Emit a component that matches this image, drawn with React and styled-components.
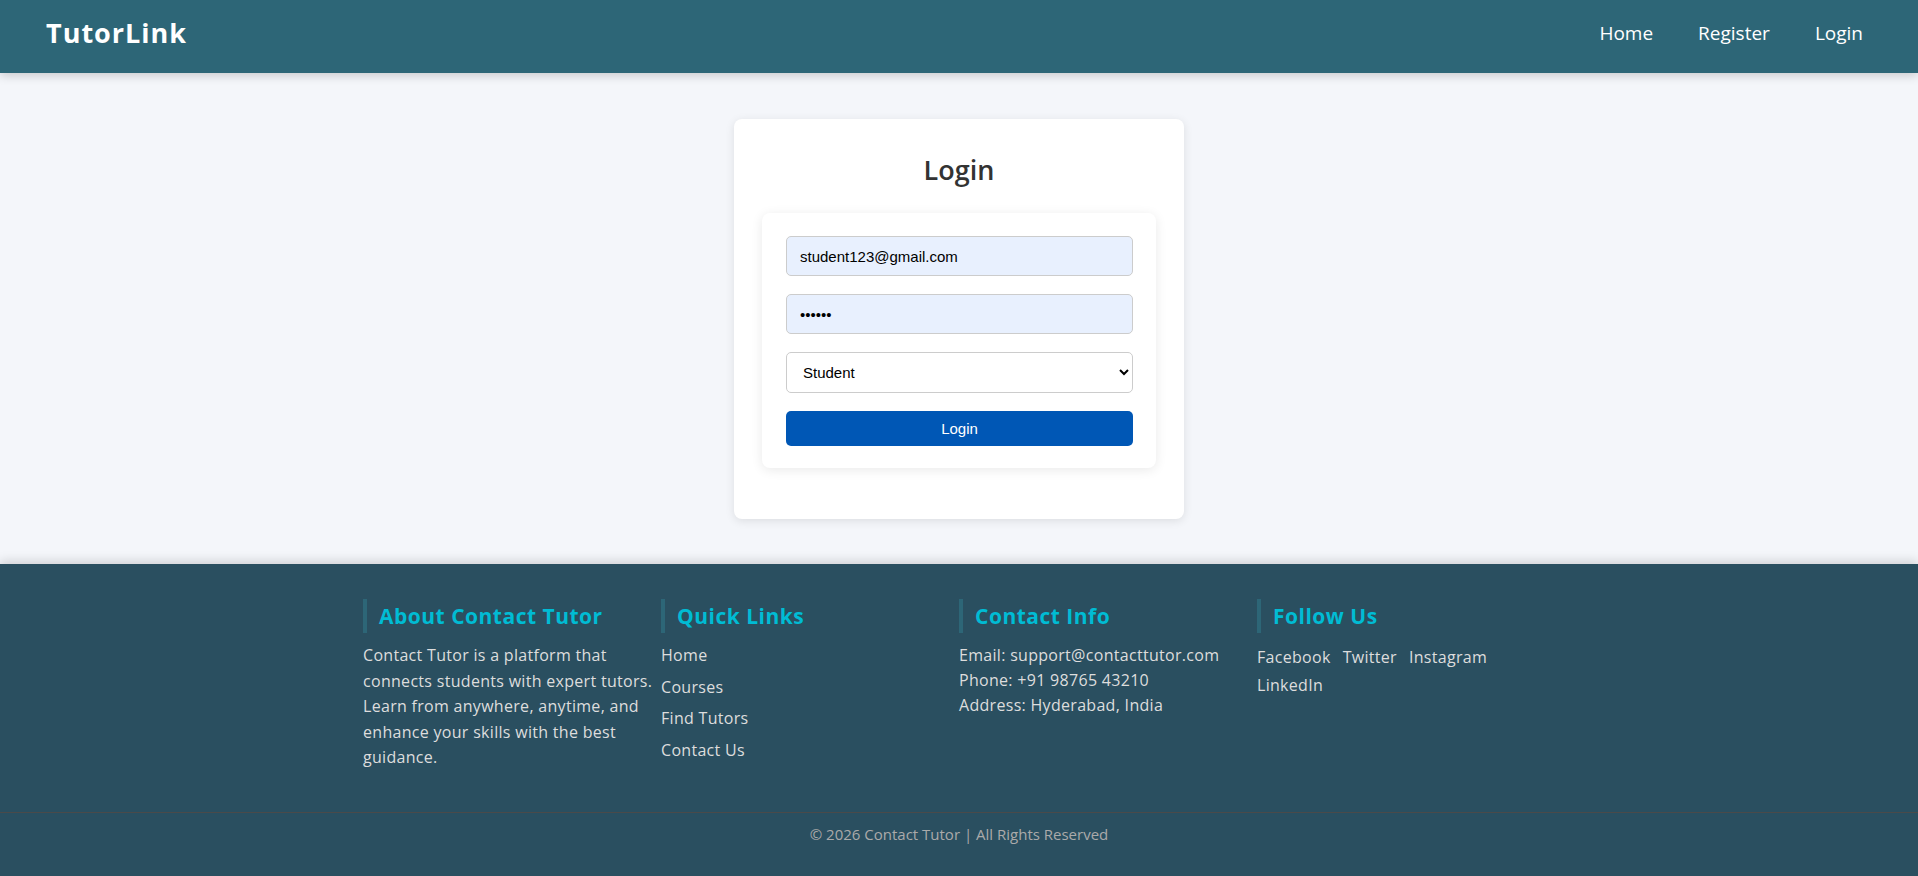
import styled, { createGlobalStyle } from "styled-components"

const GlobalStyle = createGlobalStyle`
  * { box-sizing: border-box; }
  body {
    margin: 0;
    background: #f4f6fa;
    font-family: "Open Sans", "Liberation Sans", sans-serif;
  }
`

const Page = styled.div`
  display: flex;
  flex-direction: column;
  min-height: 100vh;
`

const Header = styled.header`
  height: 73px;
  background: #2d6677;
  display: flex;
  align-items: center;
  justify-content: space-between;
  padding: 0 55px 8px 46px;
  box-shadow: 0 2px 10px rgba(0, 0, 0, 0.2);
  position: relative;
  z-index: 2;
`

const Logo = styled.div`
  color: #fff;
  font-size: 27px;
  font-weight: 700;
  letter-spacing: 1px;
`

const Nav = styled.nav`
  display: flex;
  gap: 45px;
  a {
    color: #fff;
    text-decoration: none;
    font-size: 19px;
  }
`

const Main = styled.main`
  padding: 46px 0 45px;
  display: flex;
  justify-content: center;
`

const Card = styled.div`
  width: 450px;
  height: 400px;
  background: #fff;
  border-radius: 8px;
  box-shadow: 0 2px 10px rgba(0, 0, 0, 0.1);
  padding: 34px 28px 0;
`

const Title = styled.h2`
  margin: 0 0 26px;
  text-align: center;
  font-size: 27px;
  line-height: 34px;
  font-weight: 600;
  color: #333;
`

const Form = styled.form`
  display: flex;
  flex-direction: column;
  gap: 18px;
  padding: 23px 23px 22px 24px;
  border-radius: 8px;
  background: #fff;
  box-shadow: 0 2px 12px rgba(0, 0, 0, 0.09);
`

const Field = styled.input`
  height: 40px;
  padding: 0 13px;
  border: 1px solid #ccc;
  border-radius: 5px;
  background: #e8f0fe;
  font-family: "Liberation Sans", Arial, sans-serif;
  font-size: 15px;
  color: #000;
  outline: none;
`

const Select = styled.select`
  height: 41px;
  padding: 0 12px;
  border: 1px solid #ccc;
  border-radius: 5px;
  background: #fff;
  font-family: "Liberation Sans", Arial, sans-serif;
  font-size: 15px;
  color: #000;
`

const Button = styled.button`
  height: 35px;
  border: none;
  border-radius: 5px;
  background: #0057b5;
  color: #fff;
  font-family: "Liberation Sans", Arial, sans-serif;
  font-size: 15px;
`

const Footer = styled.footer`
  background: #2a4f60;
  color: #ddd;
  padding-top: 35px;
  box-shadow: 0 -3px 10px rgba(0, 0, 0, 0.15);
  flex: 1;
`

const Columns = styled.div`
  width: 1192px;
  margin: 0 auto;
  display: grid;
  grid-template-columns: repeat(4, 1fr);
`

const Column = styled.div`
  padding-right: 4px;
  font-size: 16px;
  letter-spacing: 0.3px;
`

const Heading = styled.h3`
  margin: 0 0 10px;
  border-left: 4px solid #2d6677;
  padding-left: 12px;
  font-size: 21px;
  line-height: 34px;
  font-weight: 700;
  letter-spacing: 0.5px;
  color: #00bcd4;
`

const Text = styled.p`
  margin: 0;
  line-height: ${p => p.$lh || 25.5}px;
`

const LinkList = styled.ul`
  list-style: none;
  margin: 0;
  padding: 0;
  li {
    line-height: 25.5px;
    margin-bottom: 6.2px;
  }
  a { color: #ddd; text-decoration: none; }
`

const Social = styled.div`
  line-height: 28px;
  a {
    color: #ddd;
    text-decoration: none;
    margin-right: 12px;
    display: inline-block;
  }
`

const Bottom = styled.div`
  margin-top: 41px;
  border-top: 1px solid #4a4a4a;
  padding: 11px 0 0;
  text-align: center;
  font-size: 15px;
  line-height: 20px;
  color: #aaa;
`

export default function App() {
  return (
    <Page>
      <GlobalStyle />
      <Header>
        <Logo>TutorLink</Logo>
        <Nav>
          <a href="#">Home</a>
          <a href="#">Register</a>
          <a href="#">Login</a>
        </Nav>
      </Header>
      <Main>
        <Card>
          <Title>Login</Title>
          <Form onSubmit={e => e.preventDefault()}>
            <Field type="email" defaultValue="student123@gmail.com" />
            <Field type="password" defaultValue="secret" />
            <Select defaultValue="student">
              <option value="student">Student</option>
              <option value="tutor">Tutor</option>
            </Select>
            <Button type="submit">Login</Button>
          </Form>
        </Card>
      </Main>
      <Footer>
        <Columns>
          <Column>
            <Heading>About Contact Tutor</Heading>
            <Text>
              Contact Tutor is a platform that connects students with expert tutors. Learn from anywhere, anytime, and enhance your skills with the best guidance.
            </Text>
          </Column>
          <Column>
            <Heading>Quick Links</Heading>
            <LinkList>
              <li><a href="#">Home</a></li>
              <li><a href="#">Courses</a></li>
              <li><a href="#">Find Tutors</a></li>
              <li><a href="#">Contact Us</a></li>
            </LinkList>
          </Column>
          <Column>
            <Heading>Contact Info</Heading>
            <Text $lh={25}>Email: support@contacttutor.com</Text>
            <Text $lh={25}>Phone: +91 98765 43210</Text>
            <Text $lh={25}>Address: Hyderabad, India</Text>
          </Column>
          <Column>
            <Heading>Follow Us</Heading>
            <Social>
              <a href="#">Facebook</a>
              <a href="#">Twitter</a>
              <a href="#">Instagram</a>
              <a href="#">LinkedIn</a>
            </Social>
          </Column>
        </Columns>
        <Bottom>© 2026 Contact Tutor | All Rights Reserved</Bottom>
      </Footer>
    </Page>
  )
}
